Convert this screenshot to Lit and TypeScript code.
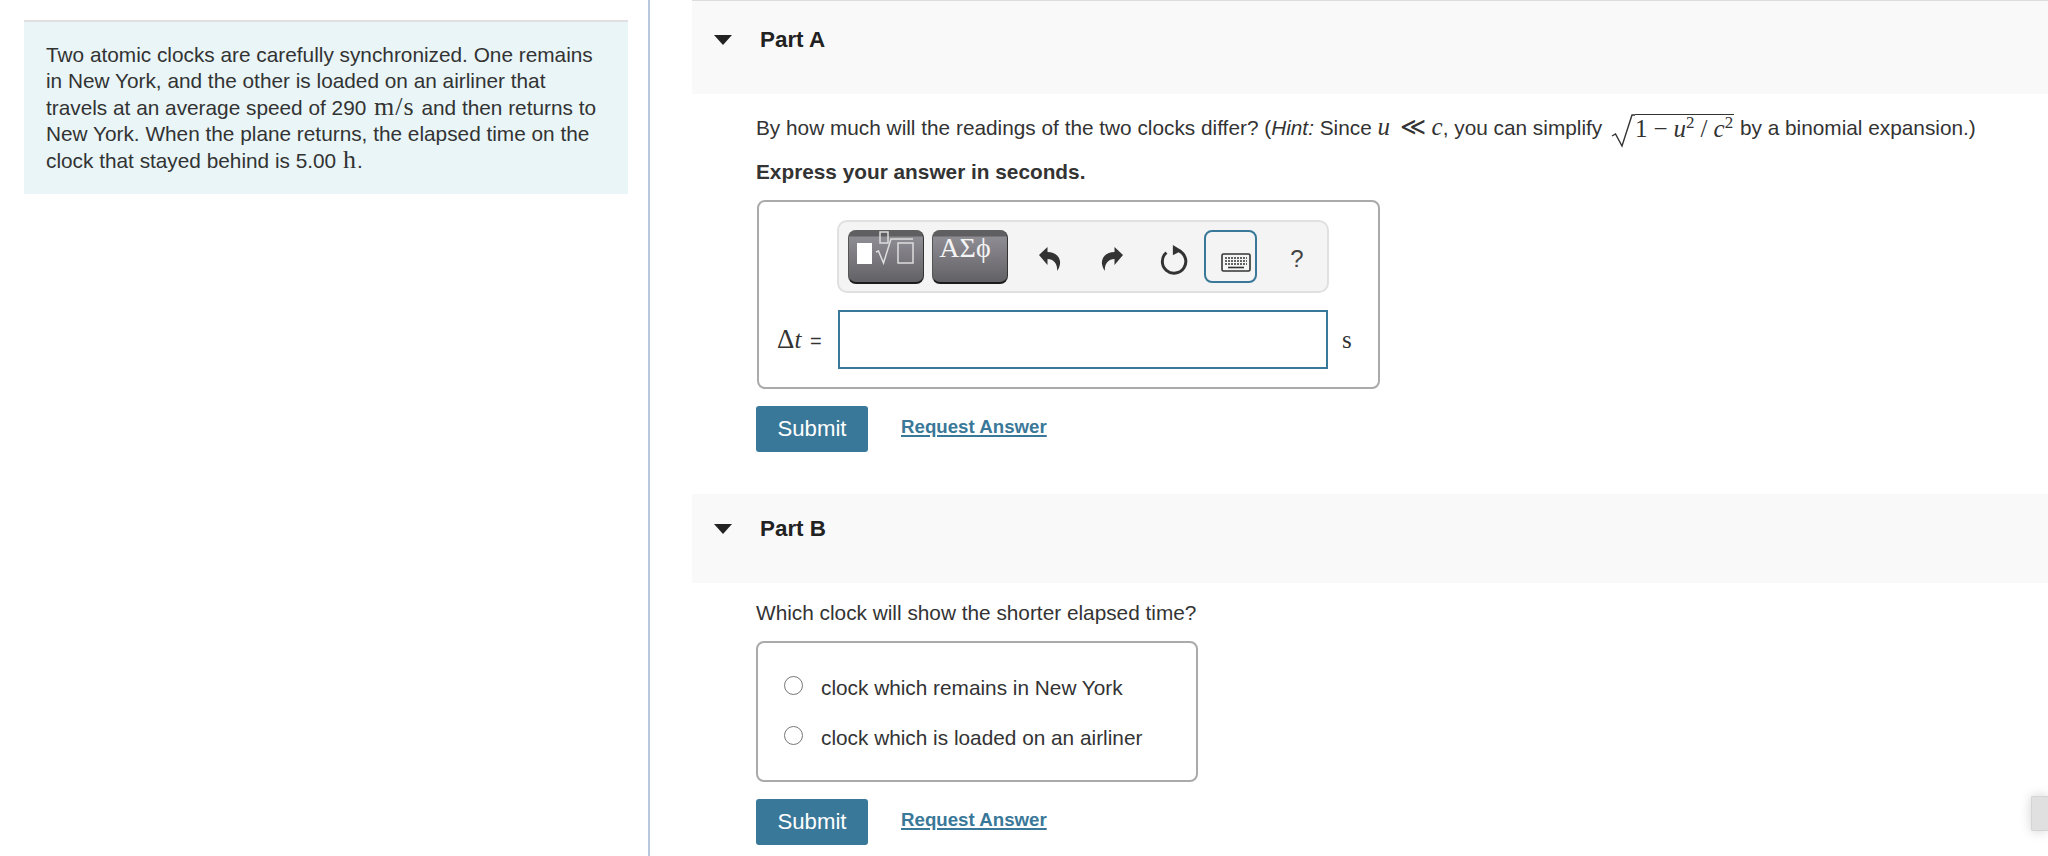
import { LitElement, html, css } from "lit";
import { customElement } from "lit/decorators.js";

@customElement("app-root")
export class AppRoot extends LitElement {
  static styles = css`
    :host { display: block; height: 856px; overflow: hidden; position: relative; background: #fff;
      font-family: "Liberation Sans", Arial, sans-serif; font-size: 20.8px; color: #333; }
    .page { display: flex; height: 856px; }
    .left { width: 650px; flex: none; box-sizing: border-box; padding: 20px 20px 0 24px; border-right: 2px solid #b9c8df; }
    .intro { background: #e9f5f7; border-top: 2px solid #e0e0e0; padding: 20px 22px 20px; line-height: 26.4px; height: 174px; box-sizing: border-box; }
    .right { flex: 1; padding-left: 42px; min-width: 0; }
    .head { background: #f9f9f9; height: 94px; display: flex; align-items: center; box-sizing: border-box; padding: 0 0 16px 22px; }
    .head.a { border-top: 1px solid #ddd; }
    .head.b { height: 89px; padding-bottom: 20px; margin-top: 42px; }
    .tri { width: 0; height: 0; border-left: 9px solid transparent; border-right: 9px solid transparent; border-top: 10px solid #222; margin-right: 28px; }
    .title { font-weight: 700; color: #222; font-size: 22.4px; }
    .body { padding-left: 64px; }
    .q { line-height: 26px; height: 26px; margin-top: 20px; white-space: nowrap; }
    .m { font-family: "Liberation Serif", serif; font-size: 25px; line-height: 0; }
    .mi { font-family: "Liberation Serif", serif; font-style: italic; font-size: 25px; line-height: 0; }
    .unit-v { font-family: "Liberation Serif", serif; font-size: 26px; line-height: 0; letter-spacing: 1px; margin: 0 1px 0 2px; }
    .unit-h { font-family: "Liberation Serif", serif; font-size: 26px; line-height: 0; margin-left: 1px; margin-right: 1px; }
    .ll { margin-left: 4px; }
    .sqrt { display: inline-flex; align-items: flex-start; vertical-align: -13px; height: 34px; line-height: 0; margin-left: 3px; }
    .sqrt svg { width: 24px; height: 34px; display: block; }
    .rad { border-top: 1.5px solid #333; height: 32px; line-height: 30px; white-space: nowrap; padding-right: 1px; }
    .op { margin: 0 6px; }
    sup { font-size: 17px; line-height: 0; vertical-align: 9px; font-family: "Liberation Serif", serif; font-style: normal; }
    .bold { font-weight: 700; line-height: 26px; margin-top: 19px; }
    .box { border: 2px solid #aaa; border-radius: 8px; box-sizing: border-box; }
    .box.eq { width: 623px; height: 189px; margin: 15px 0 0 1px; padding: 18px 0 0 18px; }
    .tb { margin-left: 60px; width: 492px; height: 73px; box-sizing: border-box; border: 2px solid #e0e0e0; border-radius: 10px; background: #f4f4f4; display: flex; align-items: flex-start; padding: 8px 0 0 9px; }
    .tbtn { width: 76px; height: 54px; box-sizing: border-box; border-radius: 8px; background: linear-gradient(#5f5e60 0, #5f5e60 6px, #8f8d94 7px, #626165 100%); border-bottom: 2px solid #1c1c1c; border-right: 1px solid #333; border-left: 1px solid #555; flex: none; }
    .tbtn + .tbtn { margin-left: 8px; }
    .tbtn svg { display: block; width: 74px; height: 52px; }
    .greek { color: #f4f4f4; font-family: "Liberation Serif", serif; font-size: 28px; text-align: center; line-height: 36px; padding-right: 10px; }
    .ico { flex: none; width: 54px; height: 53px; display: flex; align-items: center; justify-content: center; }
    .ico.down { padding-top: 5px; box-sizing: border-box; }
    .ico.reset { padding-top: 7px; }
    .ico.kb { width: 53px; box-sizing: border-box; border: 2px solid #3a7899; border-radius: 8px; margin-left: 2px; }
    .ico.kb svg { margin: 12px 0 0 10px; }
    .ico.q2 { margin-left: 13px; font-size: 24px; color: #444; padding-top: 4px; box-sizing: border-box; }
    .u1 { margin-left: 15px; }
    .u2 { margin-left: 8px; }
    .u3 { margin-left: 9px; }
    .row { display: flex; align-items: center; margin-top: 17px; }
    .lab { width: 61px; flex: none; white-space: nowrap; line-height: 30px; position: relative; top: 1px; }
    .lab .dl { font-family: "Liberation Serif", serif; font-size: 27px; line-height: 0; }
    .lab .eqs { font-family: "Liberation Sans", sans-serif; font-size: 20px; margin-left: 3px; }
    .inp { width: 490px; height: 59px; box-sizing: border-box; border: 2px solid #3a7899; flex: none; background: #fff; }
    .unit { margin-left: 14px; font-family: "Liberation Serif", serif; font-size: 25px; color: #333; }
    .acts { display: flex; align-items: flex-start; margin-top: 17px; }
    .sub { width: 112px; height: 46px; background: #3a7899; color: #fff; border-radius: 3px; display: flex; align-items: center; justify-content: center; font-size: 22.2px; flex: none; }
    .req { margin-left: 33px; color: #3a7899; font-weight: 700; font-size: 18.7px; text-decoration: underline; text-decoration-thickness: 2px; text-underline-offset: 2px; margin-top: 9px; line-height: 24px; }
    .box.radios { width: 442px; height: 141px; margin-top: 15px; padding: 20px 0 0 26px; }
    .opt { display: flex; align-items: center; height: 50px; }
    .radio { width: 19px; height: 19px; box-sizing: border-box; border: 1.5px solid #777; border-radius: 50%; background: #fff; margin-right: 18px; margin-top: -6px; flex: none; }
    .qb { margin-top: 17px; line-height: 26px; }
    .scroll { position: absolute; right: 0; top: 796px; width: 17px; height: 35px; background: #e0e0e0; box-shadow: 0 0 12px rgba(0,0,0,.18); border: 1px solid #d4d4d4; border-right: 0; box-sizing: border-box; border-radius: 2px 0 0 2px; }
  `;

  render() {
    return html`
      <div class="page">
        <div class="left">
          <div class="intro">
            Two atomic clocks are carefully synchronized. One remains in New York, and the other is loaded on an airliner that travels at an average speed of 290 <span class="unit-v">m/s</span> and then returns to New York. When the plane returns, the elapsed time on the clock that stayed behind is 5.00 <span class="unit-h">h</span>.
          </div>
        </div>
        <div class="right">
          <div class="head a"><span class="tri"></span><span class="title">Part A</span></div>
          <div class="body">
            <div class="q">By how much will the readings of the two clocks differ? (<i>Hint:</i> Since <span class="mi">u</span> <span class="m ll">≪</span> <span class="mi">c</span>, you can simplify
              <span class="sqrt">
                <svg viewBox="0 0 24 34"><path d="M1 22l3.500-2 6.500 12L21 1h3" fill="none" stroke="#333" stroke-width="1.400"/></svg>
                <span class="rad"><span class="m">1</span><span class="m op">−</span><span class="mi">u</span><sup>2</sup><span class="m op">/</span><span class="mi">c</span><sup>2</sup></span>
              </span>
              by a binomial expansion.)</div>
            <div class="bold">Express your answer in seconds.</div>
            <div class="box eq">
              <div class="tb">
                <div class="tbtn">
                  <svg viewBox="0 0 74 52" fill="none" stroke="#ddd" stroke-width="1.500">
                    <rect x="8" y="13" width="15" height="21" fill="#fff" stroke="none"/>
                    <rect x="31" y="2" width="8" height="11"/>
                    <path d="M27 22l2.500-1 5 12L42 9h22"/>
                    <rect x="49" y="13" width="15" height="20"/>
                  </svg>
                </div>
                <div class="tbtn greek">ΑΣϕ</div>
                <div class="ico down u1">
                  <svg width="24" height="26" viewBox="0 0 24 26"><path d="M1 9L9.500 1V6C17 6 23 11 22 18 21.500 21 20.500 23 19 25 20 19 16 13 9.500 13V19Z" fill="#333"/></svg>
                </div>
                <div class="ico down u2">
                  <svg width="24" height="26" viewBox="0 0 24 26"><path d="M23 9L14.500 1V6C7 6 1 11 2 18 2.500 21 3.500 23 5 25 4 19 8 13 14.500 13V19Z" fill="#333"/></svg>
                </div>
                <div class="ico down reset u3">
                  <svg width="30" height="32" viewBox="0 0 28 30"><path d="M17.500 6.300A11 11 0 1 1 6 8" fill="none" stroke="#333" stroke-width="2.800"/><path d="M12 1l8.500 5-8.500 4.500z" fill="#333"/></svg>
                </div>
                <div class="ico kb">
                  <svg width="30" height="20" viewBox="0 0 30 20"><rect x="1" y="1" width="28" height="17" rx="1.500" fill="none" stroke="#333" stroke-width="1.600"/><path d="M4 5h22M4 8h22M4 11h22" stroke="#333" stroke-width="1.500" stroke-dasharray="2 1"/><path d="M7 14.500h16" stroke="#333" stroke-width="1.600"/></svg>
                </div>
                <div class="ico q2">?</div>
              </div>
              <div class="row">
                <div class="lab"><span class="dl">Δ</span><span class="mi">t</span> <span class="eqs">=</span></div>
                <div class="inp"></div>
                <div class="unit">s</div>
              </div>
            </div>
            <div class="acts"><div class="sub">Submit</div><span class="req">Request Answer</span></div>
          </div>
          <div class="head b"><span class="tri"></span><span class="title">Part B</span></div>
          <div class="body">
            <div class="qb">Which clock will show the shorter elapsed time?</div>
            <div class="box radios">
              <div class="opt"><span class="radio"></span>clock which remains in New York</div>
              <div class="opt"><span class="radio"></span>clock which is loaded on an airliner</div>
            </div>
            <div class="acts"><div class="sub">Submit</div><span class="req">Request Answer</span></div>
          </div>
        </div>
      </div>
      <div class="scroll"></div>
    `;
  }
}
